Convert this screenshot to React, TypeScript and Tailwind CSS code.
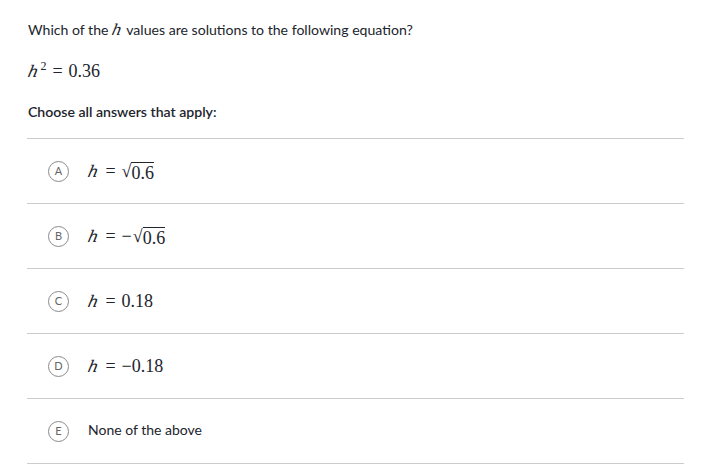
import React from "react";

const mathFont = { fontFamily: '"Liberation Serif", "DejaVu Serif", serif' };
const italicFont = { fontFamily: '"DejaVu Serif", serif', fontStyle: "italic" as const };

function H() {
  return (
    <span className="inline-block -skew-x-12 pr-[1px] text-[0.9em]" style={italicFont}>
      h
    </span>
  );
}

function Eq() {
  return <span className="mx-[6px]">=</span>;
}

function Sqrt({ children }: { children: React.ReactNode }) {
  return (
    <span className="inline-flex items-start">
      <span className="text-[18px] leading-none">√</span>
      <span className="border-t border-[#21242c] leading-[18px] pt-[1px]">{children}</span>
    </span>
  );
}

function Math({ children }: { children: React.ReactNode }) {
  return (
    <span className="text-[18px] text-[#21242c] inline-flex items-baseline" style={mathFont}>
      {children}
    </span>
  );
}

const choices: { letter: string; content: React.ReactNode }[] = [
  {
    letter: "A",
    content: (
      <Math>
        <H />
        <Eq />
        <Sqrt>0.6</Sqrt>
      </Math>
    ),
  },
  {
    letter: "B",
    content: (
      <Math>
        <H />
        <Eq />
        <span className="mr-[1px]">−</span>
        <Sqrt>0.6</Sqrt>
      </Math>
    ),
  },
  {
    letter: "C",
    content: (
      <Math>
        <H />
        <Eq />
        <span>0.18</span>
      </Math>
    ),
  },
  {
    letter: "D",
    content: (
      <Math>
        <H />
        <Eq />
        <span>−0.18</span>
      </Math>
    ),
  },
  {
    letter: "E",
    content: <span className="text-[14px] text-[#21242c] relative -top-[2px]">None of the above</span>,
  },
];

export default function App() {
  return (
    <div className="w-[720px] h-[465px] bg-white overflow-hidden" style={{ fontFamily: 'Lato, "Noto Sans", sans-serif' }}>
      <div className="pl-[28px] pt-[20px] text-[#21242c]">
        <p className="text-[14.1px] leading-[18px]">
          Which of the <span className="text-[17px]"><H /></span> values are solutions to the following equation?
        </p>
        <p className="mt-[22px] text-[18px] leading-[20px]" style={mathFont}>
          <H />
          <sup className="text-[12px] relative -top-[7px] ml-[1px]">2</sup>
          <Eq />
          0.36
        </p>
        <p className="mt-[21px] text-[14.1px] leading-[18px] font-semibold">Choose all answers that apply:</p>
      </div>
      <div className="ml-[27px] w-[657px] mt-[17px] border-t border-[#cccccc]">
        {choices.map((c) => (
          <div key={c.letter} className="h-[65px] border-b border-[#cccccc] flex items-center pl-[21px]">
            <span className="w-[21px] h-[21px] rounded-full border-[1.5px] border-[#8a8a8a] flex items-center justify-center text-[11px] text-[#666666] shrink-0">
              {c.letter}
            </span>
            <span className="ml-[19px]">{c.content}</span>
          </div>
        ))}
      </div>
    </div>
  );
}
